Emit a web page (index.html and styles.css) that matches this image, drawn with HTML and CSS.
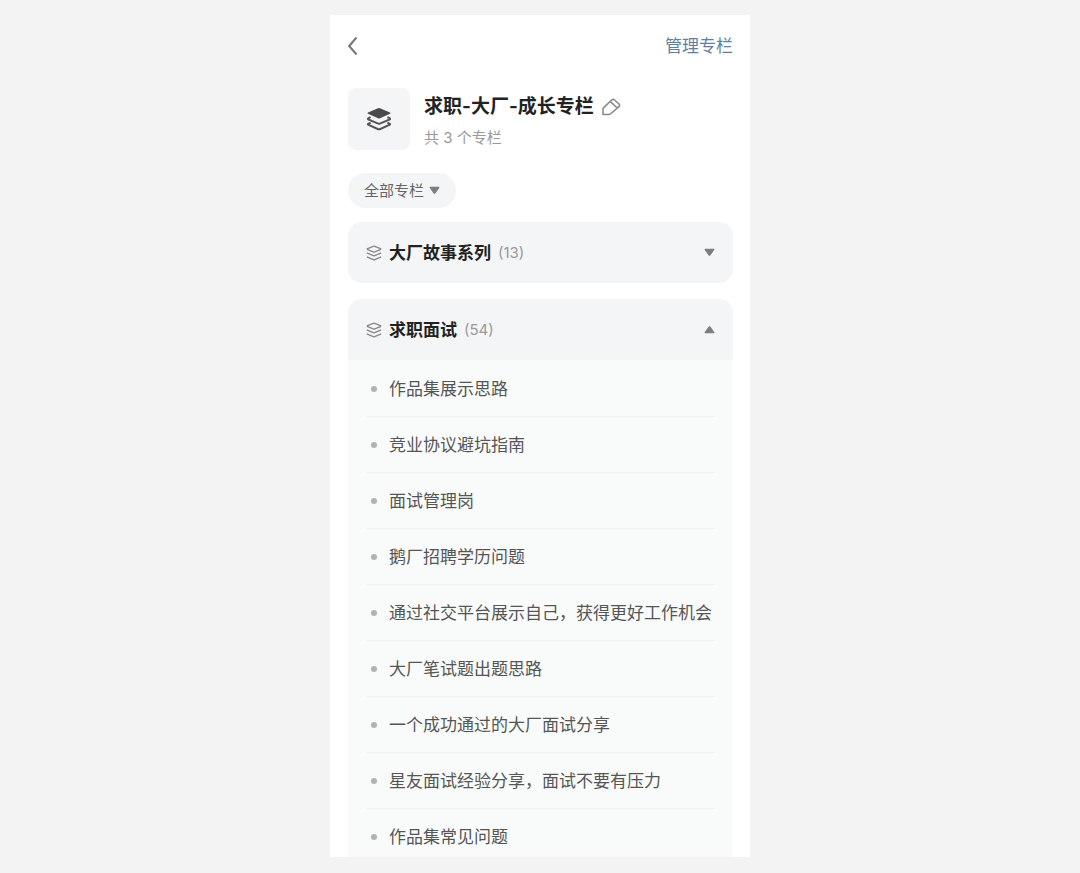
FILE: index.html
```
<!DOCTYPE html>
<html lang="zh-CN">
<head>
  <meta charset="UTF-8">
  <meta name="viewport" content="width=device-width, initial-scale=1.0">
  <title>求职-大厂-成长专栏</title>
  <link rel="stylesheet" href="styles.css">
</head>
<body>
  <svg class="sprite" aria-hidden="true">
    <symbol id="layers" viewBox="0 0 16 16">
      <path d="M7.3 1.3q.7-.3 1.4 0L14.4 3.6q.9.5 0 1L8.7 6.9q-.7.3-1.4 0L1.6 4.6q-.9-.5 0-1Z M.8 7.8 7.3 10.7q.7.3 1.4 0L15.2 7.8 M.8 11.8 7.3 14.7q.7.3 1.4 0L15.2 11.8"/>
    </symbol>
    <symbol id="arrow" viewBox="0 0 10 8">
      <path d="M1 1.2h8L5.5 6.2q-.5.6-1 0Z"/>
    </symbol>
  </svg>

  <main class="phone">
    <header class="navbar">
      <button class="back" aria-label="返回">
        <svg width="10" height="20" viewBox="0 0 10 20"><path d="M8.5 1.5 1.2 10 8.5 18.5"/></svg>
      </button>
      <a class="manage" href="#">管理专栏</a>
    </header>

    <section class="profile">
      <div class="cover">
        <svg width="26" height="26" viewBox="0 0 26 26">
          <path class="fill" d="M12 2.3q1-.4 2 0L24 6.4q1.2.7 0 1.4L14 12.2q-1 .4-2 0L2 7.8q-1.2-.7 0-1.4Z"/>
          <path d="M4.6 11.2 2.2 12.4q-.5.5 0 .9L12.2 17.6q.8.3 1.6 0L23.8 13.3q.5-.4 0-.9L21.4 11.2"/>
          <path d="M4.6 16.6 2.2 17.8q-.5.5 0 .9L12.2 23.2q.8.3 1.6 0L23.8 18.7q.5-.4 0-.9L21.4 16.6"/>
        </svg>
      </div>
      <div class="info">
        <div class="title-row">
          <h1>求职-大厂-成长专栏</h1>
          <button class="edit" aria-label="编辑">
            <svg width="20" height="20" viewBox="0 0 20 20">
              <path d="M2 17.6V12Q2 11.4 2.5 10.9L10.6 3q1.5-1.3 3 0L18 7q1.3 1.3 0 2.6L9.4 17q-.7.6-1.4.6Z M9.4 4.6 16.2 11"/>
            </svg>
          </button>
        </div>
        <p>共 3 个专栏</p>
      </div>
    </section>

    <button class="filter">全部专栏<svg class="arrow"><use href="#arrow"/></svg></button>

    <section class="group">
      <button class="group-head" aria-expanded="false">
        <svg class="layers"><use href="#layers"/></svg>
        <span class="name">大厂故事系列</span>
        <span class="count">(13)</span>
        <svg class="arrow"><use href="#arrow"/></svg>
      </button>
    </section>

    <section class="group">
      <button class="group-head" aria-expanded="true">
        <svg class="layers"><use href="#layers"/></svg>
        <span class="name">求职面试</span>
        <span class="count">(54)</span>
        <svg class="arrow up"><use href="#arrow"/></svg>
      </button>
      <ul class="list">
        <li><a href="#">作品集展示思路</a></li>
        <li><a href="#">竞业协议避坑指南</a></li>
        <li><a href="#">面试管理岗</a></li>
        <li><a href="#">鹅厂招聘学历问题</a></li>
        <li><a href="#">通过社交平台展示自己，获得更好工作机会</a></li>
        <li><a href="#">大厂笔试题出题思路</a></li>
        <li><a href="#">一个成功通过的大厂面试分享</a></li>
        <li><a href="#">星友面试经验分享，面试不要有压力</a></li>
        <li><a href="#">作品集常见问题</a></li>
      </ul>
    </section>
  </main>
</body>
</html>
```

FILE: styles.css
```
* {
  box-sizing: border-box;
}
body {
  margin: 0;
  padding: 15px 0 16px;
  height: 100vh;
  background: #f3f3f3;
  color: #555;
  font-family: Inter, "Noto Sans CJK SC", sans-serif;
  font-size: 17px;
}
button {
  padding: 0;
  border: none;
  background: none;
  color: inherit;
  font: inherit;
  cursor: pointer;
}
a {
  color: inherit;
  text-decoration: none;
}
svg {
  display: block;
  flex: none;
  fill: none;
  stroke: #888;
}
.sprite {
  position: absolute;
  width: 0;
  height: 0;
}

/* the screen cuts the list off at the bottom */
.phone {
  max-width: 420px;
  height: 100%;
  margin: 0 auto;
  padding: 0 17px 0 18px;
  background: #fff;
  overflow: hidden;
}
.navbar {
  display: flex;
  align-items: center;
  justify-content: space-between;
  height: 61px;
  line-height: 24px;
}
.back svg {
  stroke: #777;
  stroke-width: 2;
}
.manage {
  color: #5f7f9f;
}

.profile {
  display: flex;
  align-items: flex-start;
  gap: 14px;
  margin: 12px 0 20px;
}
.cover {
  display: flex;
  align-items: center;
  justify-content: center;
  width: 62px;
  height: 62px;
  border-radius: 8px;
  background: #f4f5f7;
}
.cover svg {
  stroke: #555;
  stroke-width: 2;
}
.cover .fill {
  fill: #4a4a4a;
  stroke: none;
}
.info {
  padding-top: 3px;
}
.title-row {
  display: flex;
  align-items: center;
  gap: 7px;
}
h1 {
  margin: 0;
  color: #222;
  font-size: 19px;
  line-height: 32px;
}
.edit svg {
  stroke-width: 1.5;
  stroke-linejoin: round;
}
.info p {
  margin: 0;
  color: #999;
  font-size: 15px;
  line-height: 30px;
}

.filter {
  display: flex;
  align-items: center;
  gap: 5px;
  height: 35px;
  padding: 0 16px;
  border-radius: 18px;
  background: #f4f5f7;
  color: #666;
  font-size: 15px;
  line-height: 20px;
}
.arrow {
  width: 11px;
  height: 9px;
  fill: #7c7e80;
  stroke: #7c7e80;
  stroke-linejoin: round;
}
.up {
  transform: rotate(180deg);
}

.group {
  margin: 14px 0 16px;
  border-radius: 14px;
  background: #f9fbfa;
  overflow: hidden;
}
.group-head {
  display: flex;
  align-items: center;
  width: 100%;
  height: 61px;
  padding: 0 18px;
  background: #f4f5f7;
  line-height: 24px;
}
.layers {
  width: 16px;
  height: 16px;
  margin-right: 7px;
  stroke-width: 1.3;
}
.name {
  color: #222;
  font-weight: bold;
}
.count {
  margin: 0 auto 0 7px;
  color: #999;
  font-size: 15px;
}

.list {
  margin: 0;
  padding: 1px 18px 14px;
  list-style: none;
}
.list li {
  display: flex;
  align-items: center;
  height: 56px;
  border-bottom: 1px solid #f0f2f2;
  line-height: 24px;
  white-space: nowrap;
}
.list li::before {
  content: "";
  width: 6px;
  height: 6px;
  margin: 0 12px 0 5px;
  border-radius: 50%;
  background: #b0b2b2;
}
```
